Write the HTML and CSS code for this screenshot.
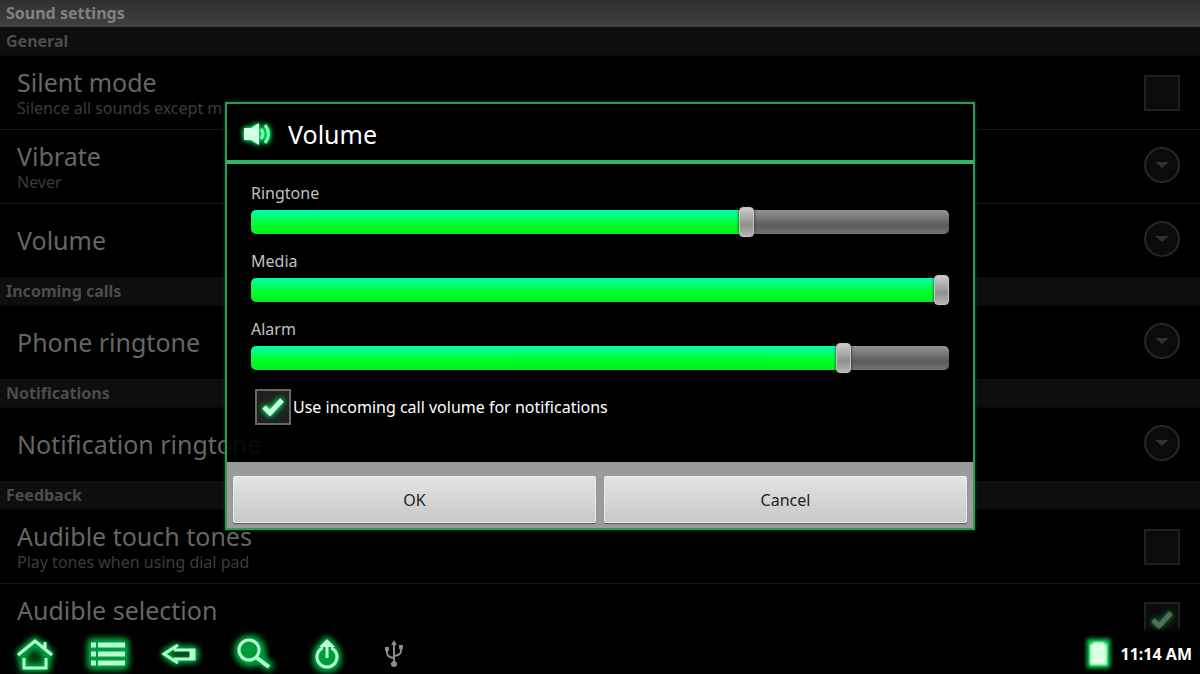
FILE: index.html
```html
<!DOCTYPE html>
<html lang="en">
<head>
<meta charset="utf-8">
<title>Sound settings</title>
<link rel="stylesheet" href="styles.css">
</head>
<body>
<div class="screen">
  <main class="content">
    <div class="settings">
      <h1 class="title-bar">Sound settings</h1>

      <h2 class="section">General</h2>
      <div class="group">
        <label class="row">
          <span class="row-text"><span class="row-title">Silent mode</span><span class="row-summary">Silence all sounds except m</span></span>
          <input type="checkbox" class="check">
        </label>
        <button class="row">
          <span class="row-text"><span class="row-title">Vibrate</span><span class="row-summary">Never</span></span>
          <svg class="more" viewBox="0 0 36 36"><circle cx="18" cy="18" r="17"/><path d="M11 15h14l-7 6z"/></svg>
        </button>
        <button class="row">
          <span class="row-text"><span class="row-title">Volume</span></span>
          <svg class="more" viewBox="0 0 36 36"><circle cx="18" cy="18" r="17"/><path d="M11 15h14l-7 6z"/></svg>
        </button>
      </div>

      <h2 class="section">Incoming calls</h2>
      <div class="group">
        <button class="row">
          <span class="row-text"><span class="row-title">Phone ringtone</span></span>
          <svg class="more" viewBox="0 0 36 36"><circle cx="18" cy="18" r="17"/><path d="M11 15h14l-7 6z"/></svg>
        </button>
      </div>

      <h2 class="section">Notifications</h2>
      <div class="group">
        <button class="row">
          <span class="row-text"><span class="row-title">Notification ringtone</span></span>
          <svg class="more" viewBox="0 0 36 36"><circle cx="18" cy="18" r="17"/><path d="M11 15h14l-7 6z"/></svg>
        </button>
      </div>

      <h2 class="section">Feedback</h2>
      <div class="group">
        <label class="row">
          <span class="row-text"><span class="row-title">Audible touch tones</span><span class="row-summary">Play tones when using dial pad</span></span>
          <input type="checkbox" class="check">
        </label>
        <label class="row">
          <span class="row-text"><span class="row-title">Audible selection</span></span>
          <span class="check-box">
            <input type="checkbox" class="check" checked>
            <svg class="tick tick-dim" viewBox="0 0 36 36"><path d="M9 18l6 6 12-13"/></svg>
          </span>
        </label>
      </div>
    </div>

    <div class="overlay">
      <section class="dialog" role="dialog" aria-labelledby="dialog-title">
        <header class="dialog-head">
          <svg class="speaker" viewBox="0 0 36 32"><path class="solid" d="M4 10h7l8-5v22l-8-5H4z"/><path class="wave" d="M21 11q4 5 0 10M25 7q7 9 0 18"/></svg>
          <h2 class="dialog-title" id="dialog-title">Volume</h2>
        </header>
        <div class="dialog-body">
          <div class="field">
            <label for="ringtone">Ringtone</label>
            <input type="range" class="slider" id="ringtone" min="0" max="7" value="5" style="--level: 5">
          </div>
          <div class="field">
            <label for="media">Media</label>
            <input type="range" class="slider" id="media" min="0" max="7" value="7" style="--level: 7">
          </div>
          <div class="field">
            <label for="alarm">Alarm</label>
            <input type="range" class="slider" id="alarm" min="0" max="7" value="6" style="--level: 6">
          </div>
          <label class="option">
            <span class="check-box">
              <input type="checkbox" class="check check-lit" checked>
              <svg class="tick" viewBox="0 0 36 36"><path d="M9 18l6 6 12-13"/></svg>
            </span>
            Use incoming call volume for notifications
          </label>
        </div>
        <footer class="dialog-foot">
          <button class="action">OK</button>
          <button class="action">Cancel</button>
        </footer>
      </section>
    </div>
  </main>

  <nav class="status-bar">
    <button class="nav-button" aria-label="Home"><svg class="glow" viewBox="0 0 48 42"><path class="haze" d="M24 5L42 21l-4 4v12H10V25l-4-4z"/><path class="core" d="M24 16l7 6v8H17v-8z"/><path d="M7 22L24 8l17 14M34 15V9M13 25v10h22V25"/></svg></button>
    <button class="nav-button" aria-label="Menu"><svg class="glow" viewBox="0 0 48 42"><path class="haze" d="M5 7h38v28H5z"/><path class="bars" d="M7 12h5M14 12h27M7 21h5M14 21h27M7 30h5M14 30h27"/></svg></button>
    <button class="nav-button" aria-label="Back"><svg class="glow" viewBox="0 0 48 42"><path class="haze" d="M5 21l15-10v4h20v13H20v4z"/><path class="core" d="M12 21l6-3h17v6H18z"/><path d="M21 12L7 21l14 9M17 17h20v9H17M34 17v9"/></svg></button>
    <button class="nav-button" aria-label="Search"><svg class="glow" viewBox="0 0 48 42"><circle class="haze" cx="20" cy="18" r="14"/><path class="haze" d="M26 26l5-4 12 11-4 4z"/><circle cx="19" cy="17" r="10"/><path class="thick" d="M27 25l12 9"/></svg></button>
    <button class="nav-button" aria-label="Power"><svg class="glow" viewBox="0 0 48 42"><path class="haze" d="M24 4l12 14v14l-6 5H18l-6-5V18z"/><circle cx="24" cy="24" r="10"/><path class="gap" d="M20 12h8v7h-8z"/><path d="M24 25V10"/><path class="head" d="M24 6l8 8H16z"/></svg></button>
    <svg class="usb" viewBox="0 0 24 32"><path d="M12 25V5M12 20q-7-1-7-5v-3M12 18q7-1 7-5v-3"/><path class="fill" d="M12 2l3 5H9zM3 9h4v4H3zM17 7h4v4h-4z"/><circle class="fill" cx="12" cy="26" r="3"/></svg>
    <div class="status">
      <svg class="battery" viewBox="0 0 32 42"><path class="halo" d="M4 6h23v29H4z"/><path class="core" d="M7 11h3V9h11v2h3v21H7z"/></svg>
      <time>11:14 AM</time>
    </div>
  </nav>
</div>
</body>
</html>
```
FILE: styles.css
```css
* { box-sizing: border-box; }

body {
  margin: 0;
  background: #000;
  color: #fff;
  font-family: "Noto Sans", "Open Sans", sans-serif;
}

h1, h2 { margin: 0; }

button {
  margin: 0;
  padding: 0;
  border: 0;
  background: none;
  color: inherit;
  font: inherit;
}

.screen {
  display: flex;
  flex-direction: column;
  height: 100vh;
}

.content {
  position: relative;
  flex: 1;
  min-height: 0;
}

.settings {
  height: 100%;
  overflow: hidden;
}

.title-bar {
  padding: 0 6px;
  background: linear-gradient(#303030, #404040);
  color: #818181;
  font-size: 16px;
  line-height: 27px;
}

.section {
  padding: 0 6px;
  border-bottom: 1px solid #080808;
  background: #0e0e0e;
  color: #4c4c4c;
  font-size: 16px;
  line-height: 28px;
}

.row {
  display: flex;
  align-items: center;
  justify-content: space-between;
  width: 100%;
  height: 73px;
  padding: 0 20px 2px 17px;
  text-align: left;
}

.row + .row {
  height: 74px;
  border-top: 1px solid #161616;
}

.row-text {
  display: flex;
  flex-direction: column;
}

label.row .row-text { min-height: 52px; }

.row-title {
  color: #666;
  font-size: 25px;
  line-height: 32px;
}

.row-summary {
  color: #3c3c3c;
  font-size: 16px;
  line-height: 20px;
}

.more {
  width: 36px;
  height: 36px;
  margin-bottom: 2px;
  fill: #0b0b0b;
  stroke: #262626;
  stroke-width: 2;
}

.more path {
  fill: #303030;
  stroke: none;
}

.check-box {
  position: relative;
  display: flex;
}

.check {
  appearance: none;
  width: 36px;
  height: 36px;
  margin: 0;
  border: 2px solid #202020;
  background: #0b0b0b;
}

.row > .check { margin-top: 2px; }

.check-lit {
  border-color: #686868;
  background: #202020;
}

.tick {
  position: absolute;
  inset: 0;
  fill: none;
  stroke: #c4ffdb;
  stroke-width: 5;
  filter: drop-shadow(0 0 2px #00e65c) drop-shadow(0 0 3px #00b347);
}

.tick-dim { opacity: 0.4; }

.overlay {
  position: absolute;
  inset: 0;
  display: flex;
  align-items: center;
  justify-content: center;
}

.dialog {
  width: 62.5%;
  border: 2px solid #2f9a5a;
  background: rgba(0, 0, 0, 0.9);
  box-shadow: 0 0 3px #0a5a28;
}

.dialog-head {
  display: flex;
  align-items: center;
  gap: 12px;
  height: 60px;
  padding: 3px 13px 0;
  border-bottom: 4px solid #2fb862;
}

.dialog-title {
  font-size: 25px;
  font-weight: 400;
  line-height: 32px;
}

.speaker {
  width: 36px;
  height: 32px;
  filter: drop-shadow(0 0 2px #00e65c) drop-shadow(0 0 2px #00c853);
}

.speaker .solid { fill: #d4ffe6; }

.speaker .wave {
  fill: none;
  stroke: #7dffb0;
  stroke-width: 3;
}

.dialog-body {
  display: flex;
  flex-direction: column;
  gap: 14px;
  padding: 19px 24px 37px;
}

.field {
  display: flex;
  flex-direction: column;
  gap: 4px;
  color: #c0c0c0;
  font-size: 16px;
  line-height: 20px;
}

.slider {
  appearance: none;
  width: 100%;
  height: 30px;
  margin: 0;
  background: none;
}

.slider::-webkit-slider-runnable-track {
  height: 24px;
  border-radius: 5px;
  background:
    linear-gradient(#00ffb0, #00ff28 60%, #00f020) 0 0 / calc((100% - 15px) * var(--level) / 7 + 7px) 100% no-repeat,
    linear-gradient(#929292, #5c5c5c 65%, #727272);
}

.slider::-webkit-slider-thumb {
  appearance: none;
  width: 15px;
  height: 30px;
  margin-top: -3px;
  border: 1px solid #c4c4c4;
  border-radius: 4px;
  background: linear-gradient(#ccc, #909090 60%, #b4b4b4);
  box-shadow: 0 0 3px #222;
}

.option {
  display: flex;
  align-items: center;
  gap: 2px;
  margin-top: 2px;
  padding-left: 4px;
  font-size: 16px;
  line-height: 20px;
}

.dialog-foot {
  display: flex;
  gap: 8px;
  padding: 14px 6px 5px;
  background: #9b9b9b;
}

.action {
  flex: 1;
  height: 47px;
  border: 1px solid #eee;
  border-radius: 2px;
  background: linear-gradient(#e3e3e3, #c8c8c8);
  box-shadow: 0 1px 1px #555;
  color: #222;
  font-size: 16px;
}

.status-bar {
  position: relative;
  display: flex;
  align-items: center;
  gap: 25px;
  height: 42px;
  padding: 2px 8px 0 11px;
  background: #000;
  box-shadow: 0 -2px 4px #000;
}

.nav-button { display: flex; }

.glow {
  width: 48px;
  height: 42px;
  overflow: visible;
  fill: none;
  stroke: #b8ffd0;
  stroke-width: 3;
  filter: drop-shadow(0 0 2px #00d050);
}

.glow .haze {
  fill: #009a3c;
  stroke: none;
  filter: blur(3px);
}

.glow .core {
  fill: #003c14;
  stroke: none;
  filter: blur(2px);
}

.glow .gap {
  fill: #009a3c;
  stroke: none;
}

.glow .head {
  fill: #b8ffd0;
  stroke: none;
}

.glow .bars { stroke-width: 5; }

.glow .thick { stroke-width: 4; }

.usb {
  width: 24px;
  height: 32px;
  margin-left: 6px;
  fill: none;
  stroke: #8c8c8c;
  stroke-width: 2;
}

.usb .fill {
  fill: #8c8c8c;
  stroke: none;
}

.status {
  display: flex;
  align-items: center;
  gap: 6px;
  margin-left: auto;
  font-size: 16px;
  font-weight: 700;
}

.battery {
  width: 32px;
  height: 42px;
  overflow: visible;
}

.battery .halo {
  fill: #00dc50;
  filter: blur(2px);
}

.battery .core {
  fill: #e0ffe8;
  filter: blur(1px);
}
```
